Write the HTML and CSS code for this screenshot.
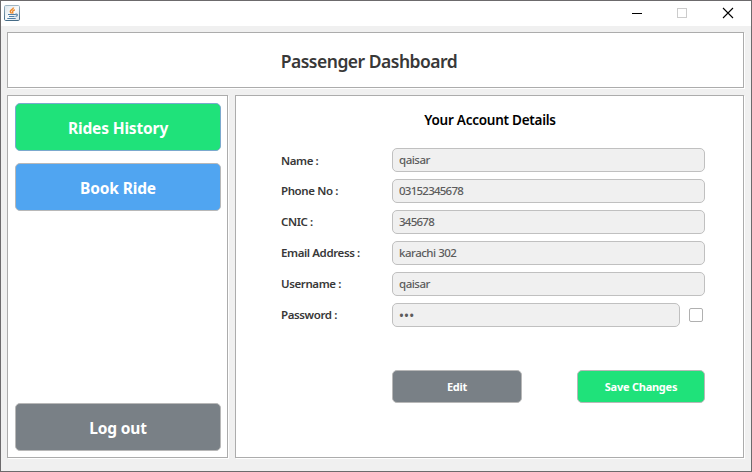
FILE: index.html
```
<!DOCTYPE html>
<html lang="en">
<head>
<meta charset="utf-8">
<title>Passenger Dashboard</title>
<link rel="stylesheet" href="styles.css">
</head>
<body>
<div class="window">
  <div class="titlebar">
    <svg class="app-icon" width="16" height="16" viewBox="0 0 16 16">
      <defs>
        <linearGradient id="frame" x1="0" y1="0" x2="0" y2="1"><stop offset="0" stop-color="#9fb5c3"/><stop offset="1" stop-color="#456b86"/></linearGradient>
        <linearGradient id="face" x1="0" y1="0" x2="1" y2="1"><stop offset="0" stop-color="#dce6ed"/><stop offset=".5" stop-color="#f8fafb"/><stop offset="1" stop-color="#d9e3ea"/></linearGradient>
      </defs>
      <rect x=".5" y=".5" width="15" height="15" rx="1.2" fill="url(#face)" stroke="url(#frame)"/>
      <path d="M9.500 2.500C9.300 4.400 6.300 5 6.300 6.600c0 .8.600 1.300 1.300 1.900M10.800 4.700C9.500 5.300 8.300 6 8.500 7c.1.600.600.900.100 1.600" fill="none" stroke="#ee8a2c" stroke-width="1.500"/>
      <path d="M4 9.500h7.500M5 11.500h5.500M3.300 13.500h8.400M11.300 9.300c2.800-.700 2.700 1.700.200 2.200" fill="none" stroke="#507fa5" stroke-width="1.100"/>
    </svg>
    <div class="controls">
      <svg width="10" height="10" viewBox="0 0 10 10"><path d="M0 5.500h10" stroke="#000"/></svg>
      <svg width="10" height="10" viewBox="0 0 10 10"><rect x=".5" y=".5" width="9" height="9" fill="none" stroke="#ccc"/></svg>
      <svg width="10" height="10" viewBox="0 0 10 10"><path d="M0 0l10 10M10 0L0 10" stroke="#000" stroke-width="1.100"/></svg>
    </div>
  </div>
  <div class="content">
    <header class="panel header"><h1>Passenger Dashboard</h1></header>
    <nav class="panel sidebar">
      <button class="btn green history">Rides History</button>
      <button class="btn blue">Book Ride</button>
      <button class="btn gray logout">Log out</button>
    </nav>
    <main class="panel details">
      <h2>Your Account Details</h2>
      <form class="form">
        <label class="first">Name :</label><div class="field">qaisar</div>
        <label>Phone No :</label><div class="field digits">03152345678</div>
        <label>CNIC :</label><div class="field digits">345678</div>
        <label>Email Address :</label><div class="field">karachi 302</div>
        <label>Username :</label><div class="field">qaisar</div>
        <label>Password :</label><div class="password"><div class="field dots">•••</div><span class="check"></span></div>
      </form>
      <div class="actions">
        <button class="btn gray edit">Edit</button>
        <button class="btn green save">Save Changes</button>
      </div>
    </main>
  </div>
</div>
</body>
</html>
```
FILE: styles.css
```
* { box-sizing: border-box; }
body { margin: 0; font-family: "Noto Sans", "Open Sans", sans-serif; }
.window { width: 752px; height: 472px; border: 1px solid #6c6a6c; background: #f0f0f0; }
.titlebar { height: 25px; background: #fff; display: flex; justify-content: space-between; padding: 4px 18px 0 3px; }
.app-icon { display: block; }
.controls { display: flex; gap: 35px; padding-top: 3px; }
.controls svg { display: block; }
.controls svg:last-child { overflow: visible; margin-left: 1px; }
.content { display: grid; grid-template-columns: 221px 509px; grid-template-rows: 56px 363px; gap: 7px; padding: 6px; }
.panel { background: #fff; border: 1px solid #acacac; box-shadow: 1px 1px 0 #fff; }
.header { grid-column: 1 / -1; display: flex; justify-content: center; align-items: center; }
h1, h2 { margin: 0; white-space: nowrap; }
h1 { font-size: 17.5px; line-height: 24px; font-weight: 600; color: #383838; letter-spacing: -.5px; padding: 1px 13px 0 0; }
.sidebar { display: flex; flex-direction: column; gap: 12px; padding: 7px 6px 6px 7px; }
.btn { height: 48px; border: 1px solid #b8b8b8; border-radius: 5px; color: #fff; font: 700 15.5px/24px "Noto Sans", sans-serif; padding: 2px 0 0; text-align: center; white-space: nowrap; letter-spacing: -.15px; }
.green { background: #1fe27a; }
.blue { background: #50a5f1; }
.gray { background: #798086; }
.history { border-color: #7ba9cd; }
.logout { margin-top: auto; }
.details { padding: 13px 38px 0 45px; }
h2 { font-size: 13.5px; line-height: 22px; font-weight: 600; color: #000; text-align: center; padding-right: 6px; letter-spacing: -.25px; }
.form { display: grid; grid-template-columns: 111px 313px; row-gap: 7px; margin-top: 17px; align-items: center; }
label { font-size: 11.5px; line-height: 24px; font-weight: 600; color: #383838; letter-spacing: -.4px; white-space: nowrap; }
.first { padding-top: 1px; height: 24px; }
.field { height: 24px; border: 1px solid #c0c0c0; border-radius: 5px; background: #f0f0f0; color: #5c5c5c; font-size: 11.5px; font-weight: 500; line-height: 22px; padding-left: 6px; letter-spacing: -.5px; }
.digits { letter-spacing: -.75px; }
.dots { font-size: 13px; letter-spacing: .2px; }
.password { display: flex; align-items: center; }
.password .field { width: 288px; }
.check { width: 14px; height: 14px; margin-left: 9px; border: 1px solid #b0b0b0; border-radius: 2px; background: #fff; }
.actions { display: flex; justify-content: space-between; margin: 43px 0 0 111px; }
.actions .btn { height: 33px; font-size: 11px; line-height: 18px; padding-top: 1px; letter-spacing: -.25px; }
.edit { width: 130px; }
.save { width: 128px; }
```
